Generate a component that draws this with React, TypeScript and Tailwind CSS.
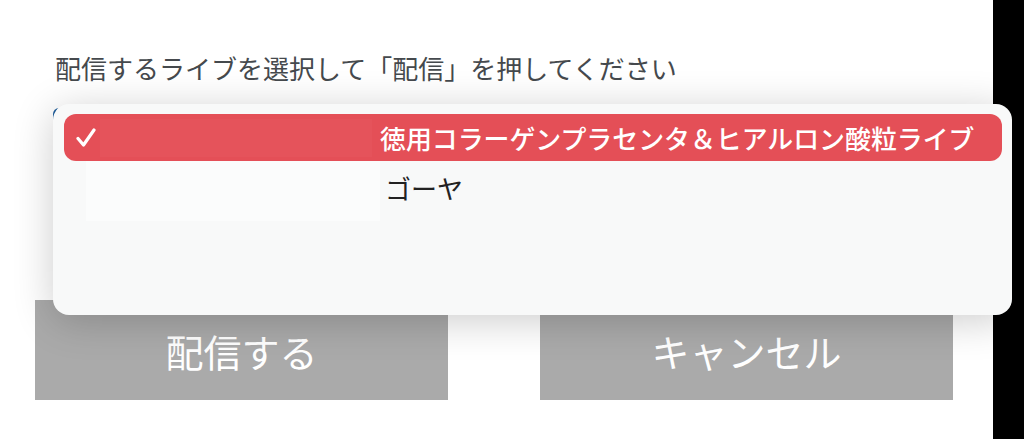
import React from "react";

export default function App() {
  return (
    <div
      className="flex h-[439px] w-[1024px] overflow-hidden bg-white"
      style={{ fontFamily: '"Noto Sans CJK JP", "Noto Sans", sans-serif' }}
    >
      <div className="relative flex w-[993px] flex-col">
        <p className="ml-[55px] mt-[50px] text-[26px] leading-[36px] text-[#45494d]">
          配信するライブを選択して「配信」を押してください
        </p>
        <div className="ml-[53px] mt-[22px] h-[100px] w-[800px] rounded-l-[6px] border-l-[3px] border-[#1d5d9b] bg-white" />
        <div className="mt-[92px] flex gap-[92px] pl-[35px]">
          <button className="flex h-[100px] w-[413px] items-center justify-center bg-[#aaaaaa] text-[38px] text-white">
            配信する
          </button>
          <button className="flex h-[100px] w-[413px] items-center justify-center bg-[#aaaaaa] text-[38px] text-white">
            キャンセル
          </button>
        </div>
      </div>
      <div className="h-full flex-1 bg-black" />

      <div className="absolute left-[53px] top-[104px] z-10 h-[211px] w-[959px] rounded-[16px] bg-[#f8f9f9] pl-[11px] pr-[10px] pt-[10px] shadow-[0_6px_40px_rgba(0,0,0,0.2)]">
        <div className="flex h-[47px] items-center rounded-[12px] bg-[#e44f57] pl-[12px]">
          <svg width="20" height="20" viewBox="0 0 20 20" className="shrink-0">
            <path
              d="M2 10.5 L7.5 17 L18 2"
              fill="none"
              stroke="white"
              strokeWidth="3.2"
              strokeLinecap="round"
              strokeLinejoin="round"
            />
          </svg>
          <div className="ml-[4px] h-[38px] w-[272px] bg-[#e5535b]" />
          <span className="ml-[8px] text-[25.9px] font-medium leading-none text-white">
            徳用コラーゲンプラセンタ＆ヒアルロン酸粒ライブ
          </span>
        </div>
        <div className="flex h-[54px] items-center">
          <div className="ml-[22px] h-[60px] w-[294px] self-start bg-[#fbfcfc]" />
          <span className="ml-[5px] text-[26px] leading-none text-[#222]">ゴーヤ</span>
        </div>
      </div>
    </div>
  );
}
